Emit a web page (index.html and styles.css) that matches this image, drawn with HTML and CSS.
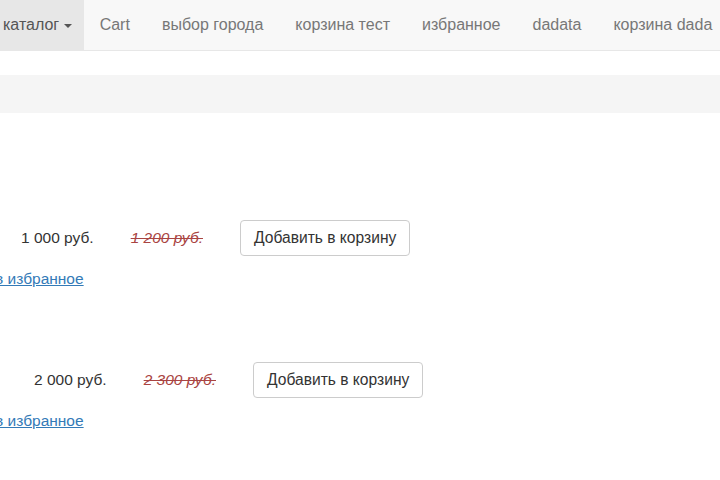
FILE: index.html
```html
<!DOCTYPE html>
<html lang="ru">
<head>
<meta charset="utf-8">
<title>Каталог</title>
<link rel="stylesheet" href="styles.css">
</head>
<body>
<div class="navbar">
    <ul class="nav">
        <li class="nav-item active first"><a href="#">каталог <span class="caret"></span></a></li>
        <li class="nav-item"><a href="#">Cart</a></li>
        <li class="nav-item"><a href="#">выбор города</a></li>
        <li class="nav-item"><a href="#">корзина тест</a></li>
        <li class="nav-item"><a href="#">избранное</a></li>
        <li class="nav-item"><a href="#">dadata</a></li>
        <li class="nav-item"><a href="#">корзина dada</a></li>
    </ul>
</div>
<div class="breadcrumb"></div>
<div class="products">
    <div class="product">
        <div class="product-line line-1">
            <span class="price">1 000 руб.</span>
            <span class="old-price">1 200 руб.</span>
            <button class="btn" type="button">Добавить в корзину</button>
        </div>
        <div class="fav"><a href="#">в избранное</a></div>
    </div>
    <div class="product">
        <div class="product-line line-2">
            <span class="price">2 000 руб.</span>
            <span class="old-price">2 300 руб.</span>
            <button class="btn" type="button">Добавить в корзину</button>
        </div>
        <div class="fav"><a href="#">в избранное</a></div>
    </div>
</div>
</body>
</html>
```

FILE: styles.css
```css
html,body{margin:0;padding:0;overflow:hidden;}
body{font-family:"Liberation Sans",Arial,sans-serif;font-size:15.5px;color:#333;background:#fff;}
ul,li{margin:0;padding:0;list-style:none;}

.navbar{height:51px;background:#f8f8f8;border-bottom:1px solid #e7e7e7;box-sizing:border-box;}
.nav{display:flex;height:50px;white-space:nowrap;font-size:16px;}
.nav-item a{display:block;line-height:50px;padding:0 16px;color:#777;text-decoration:none;}
.nav-item.first a{padding-left:3px;padding-right:12px;}
.nav-item.active a{background:#e7e7e7;color:#555;}
.caret{display:inline-block;width:0;height:0;margin-left:0;vertical-align:middle;border-top:4px solid #555;border-left:4px solid transparent;border-right:4px solid transparent;}

.breadcrumb{margin-top:24px;height:38px;background:#f5f5f5;}

.products{padding-top:107px;}
.product + .product{margin-top:73px;}
.product-line{display:flex;align-items:center;gap:37px;height:36px;}
.line-1{padding-left:21px;}
.line-2{padding-left:34px;}
.old-price{color:#a94442;font-style:italic;text-decoration:line-through;}
.btn{font-family:inherit;font-size:15.6px;color:#333;background:#fff;border:1px solid #ccc;border-radius:4px;height:36px;padding:0 13px;}
.fav{margin-top:13px;line-height:20px;margin-left:-5px;}
.fav a{color:#337ab7;text-decoration:underline;}
```
